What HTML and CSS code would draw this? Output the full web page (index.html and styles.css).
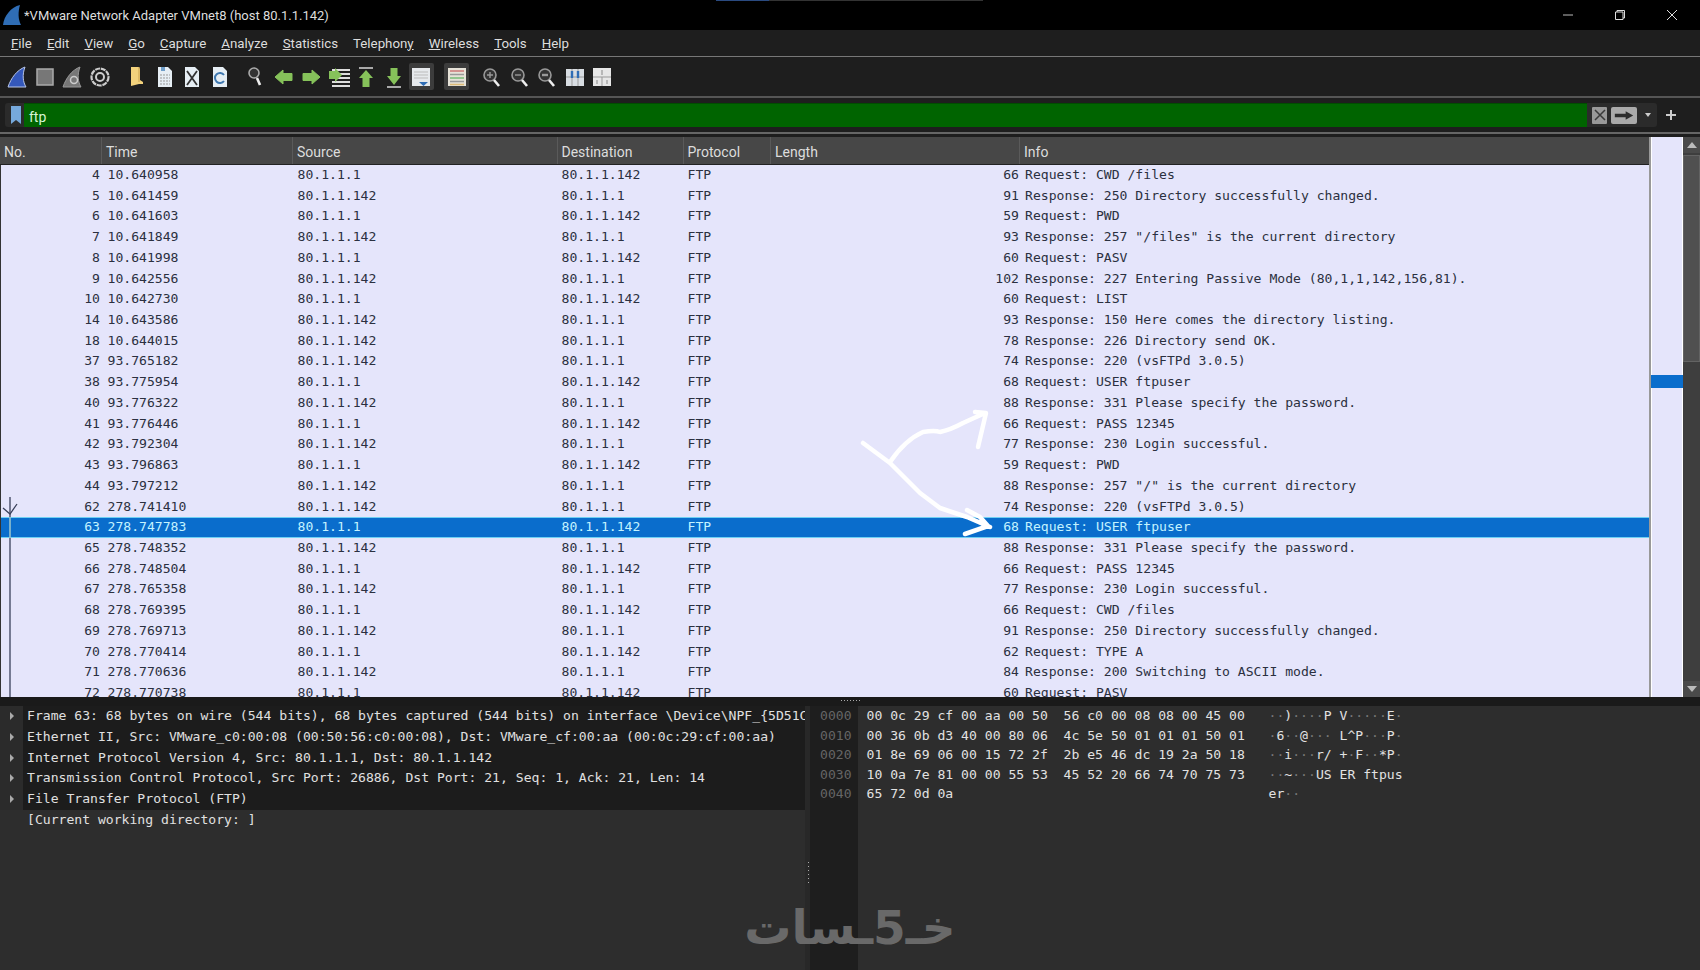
FILE: index.html
```html
<!DOCTYPE html>
<html lang="en">
<head>
    <meta charset="UTF-8">
    <title>*VMware Network Adapter VMnet8 (host 80.1.1.142)</title>
    <link rel="stylesheet" href="styles.css">
</head>
<body>
    <div class="topstrip"></div>
    <div id="titlebar">
        <svg class="appicon" viewBox="0 0 20 22"><path d="M1 21 C2 12 9 3 18 1 C16 8 16 15 19 21 Z" fill="#2f6db5"/></svg>
        <span class="titletext">*VMware Network Adapter VMnet8 (host 80.1.1.142)</span>
        <div class="wincontrols">
            <svg class="wincontrol" viewBox="0 0 12 12"><path d="M1 6H11" stroke="#bbb" fill="none"/></svg>
            <svg class="wincontrol" viewBox="0 0 12 12"><path d="M3 3V1.5H10.5V9H9M1.5 3H9V10.5H1.5Z" stroke="#ddd" fill="none"/></svg>
            <svg class="wincontrol" viewBox="0 0 12 12"><path d="M1 1L11 11M11 1L1 11" stroke="#ddd" fill="none"/></svg>
        </div>
    </div>
    <div id="menubar">
        <span><u>F</u>ile</span>
        <span><u>E</u>dit</span>
        <span><u>V</u>iew</span>
        <span><u>G</u>o</span>
        <span><u>C</u>apture</span>
        <span><u>A</u>nalyze</span>
        <span><u>S</u>tatistics</span>
        <span>Telephon<u>y</u></span>
        <span><u>W</u>ireless</span>
        <span><u>T</u>ools</span>
        <span><u>H</u>elp</span>
    </div>
    <div id="toolbar">
        <div class="toolgroup first">
            <div class="tool"><svg viewBox="0 0 24 24"><path d="M3 22 C6 13 12 5 20 2 C17 10 18 17 21 22 Z" fill="#3458bb" stroke="#b9c6e6"/></svg></div>
            <div class="tool"><svg viewBox="0 0 24 24"><rect x="4" y="4" width="16" height="16" fill="#777" stroke="#aaa" stroke-width="1.5"/></svg></div>
            <div class="tool"><svg viewBox="0 0 24 24"><path d="M3 22 C6 13 12 5 20 2 C17 10 18 17 21 22 Z" fill="#777" stroke="#999"/><circle cx="14" cy="15" r="3.5" fill="none" stroke="#ccc" stroke-width="1.5"/></svg></div>
            <div class="tool"><svg viewBox="0 0 24 24"><circle cx="12" cy="12" r="8.5" fill="none" stroke="#ccc" stroke-width="2.2" stroke-dasharray="5 0.8"/><circle cx="12" cy="12" r="4" fill="none" stroke="#ccc" stroke-width="2"/></svg></div>
        </div>
        <div class="toolgroup second">
            <div class="tool"><svg viewBox="0 0 24 24"><path d="M6 2H14L15 4V15L18 17V19L14 19L6 21Z" fill="#f3d27c"/><path d="M14 2V17" stroke="#c9a24e"/></svg></div>
            <div class="tool"><svg viewBox="0 0 24 24"><path d="M5 2H15L19 6V22H5Z" fill="#e6eef4"/><path d="M7 10H17M7 13H17M7 16H17M7 19H17" stroke="#999" stroke-dasharray="2 1"/><path d="M8 2H12V6H8Z" fill="#6f9ec9"/></svg></div>
            <div class="tool"><svg viewBox="0 0 24 24"><path d="M5 2H15L19 6V22H5Z" fill="#e6eef4"/><path d="M7 6L17 20M17 6L7 20" stroke="#333" stroke-width="1.8"/></svg></div>
            <div class="tool"><svg viewBox="0 0 24 24"><path d="M5 2H15L19 6V22H5Z" fill="#e6eef4"/><path d="M16 10A5 5 0 1 0 16 16" stroke="#3f78b0" stroke-width="2" fill="none"/></svg></div>
        </div>
        <div class="toolgroup">
            <div class="tool"><svg viewBox="0 0 24 24"><circle cx="10" cy="8" r="5" fill="#333" stroke="#aaa" stroke-width="1.6"/><path d="M13 13L16 20" stroke="#eee" stroke-width="2.6"/></svg></div>
            <div class="tool"><svg viewBox="0 0 24 24"><path d="M3 12L11 5V8.500H20V15.500H11V19Z" fill="#86c25a" stroke="#86c25a" stroke-linejoin="round"/></svg></div>
            <div class="tool"><svg viewBox="0 0 24 24"><path d="M21 12L13 5V8.500H4V15.500H13V19Z" fill="#86c25a" stroke="#86c25a" stroke-linejoin="round"/></svg></div>
            <div class="tool"><svg viewBox="0 0 24 24"><path d="M5 5H23M5 9H23M5 13H23M5 17H23M5 21H23" stroke="#ddd" stroke-width="2"/><path d="M15 10L8 3V6H2V14H8V17Z" fill="#86c25a"/></svg></div>
            <div class="tool"><svg viewBox="0 0 24 24"><path d="M5 3H19" stroke="#ccc" stroke-width="1.6"/><path d="M12 5L19 13H15.500V22H8.500V13H5Z" fill="#86c25a"/></svg></div>
            <div class="tool"><svg viewBox="0 0 24 24"><path d="M12 20L19 11H15.500V3H8.500V11H5Z" fill="#86c25a"/><path d="M5 22H19" stroke="#ccc" stroke-width="1.6"/></svg></div>
            <div class="tool boxed"><svg viewBox="0 0 24 24"><path d="M3 3H21V21H3Z" fill="#e6e9ec"/><path d="M5 7H19M5 10H19M5 13H19" stroke="#bbb"/><path d="M10 17H19L14.500 21Z" fill="#2f6db5"/></svg></div>
        </div>
        <div class="toolgroup">
            <div class="tool boxed"><svg viewBox="0 0 24 24"><path d="M3 3H21V21H3Z" fill="#e6e2d8"/><path d="M5 6H19" stroke="#c77" stroke-width="1.5"/><path d="M5 9.500H19" stroke="#999" stroke-width="1.5"/><path d="M5 13H19" stroke="#7b7" stroke-width="1.5"/><path d="M5 16.500H19" stroke="#999" stroke-width="1.5"/><path d="M5 19.500H19" stroke="#db7" stroke-width="1.5"/></svg></div>
        </div>
        <div class="toolgroup">
            <div class="tool"><svg viewBox="0 0 24 24"><circle cx="10" cy="10" r="6" fill="#333" stroke="#999" stroke-width="1.6"/><path d="M7 10H13M10 7V13" stroke="#999" stroke-width="1.4"/><path d="M14 15L19 21" stroke="#eee" stroke-width="2.6"/></svg></div>
            <div class="tool"><svg viewBox="0 0 24 24"><circle cx="10" cy="10" r="6" fill="#333" stroke="#999" stroke-width="1.6"/><path d="M7 10H13" stroke="#999" stroke-width="1.4"/><path d="M14 15L19 21" stroke="#eee" stroke-width="2.6"/></svg></div>
            <div class="tool"><svg viewBox="0 0 24 24"><circle cx="10" cy="10" r="6" fill="#333" stroke="#999" stroke-width="1.6"/><path d="M7 10H13" stroke="#999" stroke-width="2.400"/><path d="M14 15L19 21" stroke="#eee" stroke-width="2.6"/></svg></div>
            <div class="tool"><svg viewBox="0 0 24 24"><path d="M3 4H21V21H3Z" fill="#d8dde2"/><path d="M9 4V21M15 4V21M3 12H21" stroke="#999"/><path d="M9 6V13M15 6V13" stroke="#2f6db5" stroke-width="2.400"/></svg></div>
            <div class="tool"><svg viewBox="0 0 24 24"><path d="M3 3H21V21H3Z" fill="#e6e6e6"/><path d="M3 12H21M12 12V21" stroke="#999"/><path d="M12 5V10M7 15V19M17 15V19" stroke="#888"/></svg></div>
        </div>
    </div>
    <div id="filterbar">
        <div class="filterframe">
            <svg class="bookmark" viewBox="0 0 12 20"><path d="M1 1H11V19L6 15L1 19Z" fill="#76a9dc"/></svg>
            <div class="filterinput">ftp</div>
            <div class="filterbtns">
                <div class="clearbtn"><svg viewBox="0 0 14 14"><path d="M2 2L12 12M12 2L2 12" stroke="#3a3a3a" stroke-width="1.5"/></svg></div>
                <div class="applybtn"><svg viewBox="0 0 24 12"><path d="M1 4H14V1L23 6L14 11V8H1Z" fill="#2c2c2c"/></svg></div>
                <span class="caret"></span>
            </div>
        </div>
        <svg class="plus" viewBox="0 0 10 10"><path d="M5 0V10M0 5H10" stroke="#ccc" stroke-width="2"/></svg>
    </div>
    <div id="packets">
        <div class="listpane">
            <div class="listheader">
                <div class="h-no">No.</div>
                <div class="h-time">Time</div>
                <div class="h-src">Source</div>
                <div class="h-dst">Destination</div>
                <div class="h-proto">Protocol</div>
                <div class="h-len">Length</div>
                <div class="h-info">Info</div>
            </div>
            <div class="listbody">
                <div class="row"><span class="no">4</span><span class="time">10.640958</span><span class="src">80.1.1.1</span><span class="dst">80.1.1.142</span><span class="proto">FTP</span><span class="len">66</span><span class="info">Request: CWD /files</span></div>
                <div class="row"><span class="no">5</span><span class="time">10.641459</span><span class="src">80.1.1.142</span><span class="dst">80.1.1.1</span><span class="proto">FTP</span><span class="len">91</span><span class="info">Response: 250 Directory successfully changed.</span></div>
                <div class="row"><span class="no">6</span><span class="time">10.641603</span><span class="src">80.1.1.1</span><span class="dst">80.1.1.142</span><span class="proto">FTP</span><span class="len">59</span><span class="info">Request: PWD</span></div>
                <div class="row"><span class="no">7</span><span class="time">10.641849</span><span class="src">80.1.1.142</span><span class="dst">80.1.1.1</span><span class="proto">FTP</span><span class="len">93</span><span class="info">Response: 257 "/files" is the current directory</span></div>
                <div class="row"><span class="no">8</span><span class="time">10.641998</span><span class="src">80.1.1.1</span><span class="dst">80.1.1.142</span><span class="proto">FTP</span><span class="len">60</span><span class="info">Request: PASV</span></div>
                <div class="row"><span class="no">9</span><span class="time">10.642556</span><span class="src">80.1.1.142</span><span class="dst">80.1.1.1</span><span class="proto">FTP</span><span class="len">102</span><span class="info">Response: 227 Entering Passive Mode (80,1,1,142,156,81).</span></div>
                <div class="row"><span class="no">10</span><span class="time">10.642730</span><span class="src">80.1.1.1</span><span class="dst">80.1.1.142</span><span class="proto">FTP</span><span class="len">60</span><span class="info">Request: LIST</span></div>
                <div class="row"><span class="no">14</span><span class="time">10.643586</span><span class="src">80.1.1.142</span><span class="dst">80.1.1.1</span><span class="proto">FTP</span><span class="len">93</span><span class="info">Response: 150 Here comes the directory listing.</span></div>
                <div class="row"><span class="no">18</span><span class="time">10.644015</span><span class="src">80.1.1.142</span><span class="dst">80.1.1.1</span><span class="proto">FTP</span><span class="len">78</span><span class="info">Response: 226 Directory send OK.</span></div>
                <div class="row"><span class="no">37</span><span class="time">93.765182</span><span class="src">80.1.1.142</span><span class="dst">80.1.1.1</span><span class="proto">FTP</span><span class="len">74</span><span class="info">Response: 220 (vsFTPd 3.0.5)</span></div>
                <div class="row"><span class="no">38</span><span class="time">93.775954</span><span class="src">80.1.1.1</span><span class="dst">80.1.1.142</span><span class="proto">FTP</span><span class="len">68</span><span class="info">Request: USER ftpuser</span></div>
                <div class="row"><span class="no">40</span><span class="time">93.776322</span><span class="src">80.1.1.142</span><span class="dst">80.1.1.1</span><span class="proto">FTP</span><span class="len">88</span><span class="info">Response: 331 Please specify the password.</span></div>
                <div class="row"><span class="no">41</span><span class="time">93.776446</span><span class="src">80.1.1.1</span><span class="dst">80.1.1.142</span><span class="proto">FTP</span><span class="len">66</span><span class="info">Request: PASS 12345</span></div>
                <div class="row"><span class="no">42</span><span class="time">93.792304</span><span class="src">80.1.1.142</span><span class="dst">80.1.1.1</span><span class="proto">FTP</span><span class="len">77</span><span class="info">Response: 230 Login successful.</span></div>
                <div class="row"><span class="no">43</span><span class="time">93.796863</span><span class="src">80.1.1.1</span><span class="dst">80.1.1.142</span><span class="proto">FTP</span><span class="len">59</span><span class="info">Request: PWD</span></div>
                <div class="row"><span class="no">44</span><span class="time">93.797212</span><span class="src">80.1.1.142</span><span class="dst">80.1.1.1</span><span class="proto">FTP</span><span class="len">88</span><span class="info">Response: 257 "/" is the current directory</span></div>
                <div class="row"><span class="no">62</span><span class="time">278.741410</span><span class="src">80.1.1.142</span><span class="dst">80.1.1.1</span><span class="proto">FTP</span><span class="len">74</span><span class="info">Response: 220 (vsFTPd 3.0.5)</span></div>
                <div class="row selected"><span class="no">63</span><span class="time">278.747783</span><span class="src">80.1.1.1</span><span class="dst">80.1.1.142</span><span class="proto">FTP</span><span class="len">68</span><span class="info">Request: USER ftpuser</span></div>
                <div class="row"><span class="no">65</span><span class="time">278.748352</span><span class="src">80.1.1.142</span><span class="dst">80.1.1.1</span><span class="proto">FTP</span><span class="len">88</span><span class="info">Response: 331 Please specify the password.</span></div>
                <div class="row"><span class="no">66</span><span class="time">278.748504</span><span class="src">80.1.1.1</span><span class="dst">80.1.1.142</span><span class="proto">FTP</span><span class="len">66</span><span class="info">Request: PASS 12345</span></div>
                <div class="row"><span class="no">67</span><span class="time">278.765358</span><span class="src">80.1.1.142</span><span class="dst">80.1.1.1</span><span class="proto">FTP</span><span class="len">77</span><span class="info">Response: 230 Login successful.</span></div>
                <div class="row"><span class="no">68</span><span class="time">278.769395</span><span class="src">80.1.1.1</span><span class="dst">80.1.1.142</span><span class="proto">FTP</span><span class="len">66</span><span class="info">Request: CWD /files</span></div>
                <div class="row"><span class="no">69</span><span class="time">278.769713</span><span class="src">80.1.1.142</span><span class="dst">80.1.1.1</span><span class="proto">FTP</span><span class="len">91</span><span class="info">Response: 250 Directory successfully changed.</span></div>
                <div class="row"><span class="no">70</span><span class="time">278.770414</span><span class="src">80.1.1.1</span><span class="dst">80.1.1.142</span><span class="proto">FTP</span><span class="len">62</span><span class="info">Request: TYPE A</span></div>
                <div class="row"><span class="no">71</span><span class="time">278.770636</span><span class="src">80.1.1.142</span><span class="dst">80.1.1.1</span><span class="proto">FTP</span><span class="len">84</span><span class="info">Response: 200 Switching to ASCII mode.</span></div>
                <div class="row"><span class="no">72</span><span class="time">278.770738</span><span class="src">80.1.1.1</span><span class="dst">80.1.1.142</span><span class="proto">FTP</span><span class="len">60</span><span class="info">Request: PASV</span></div>
            </div>
        </div>
        <div class="overview"><div class="overviewmark"></div></div>
        <div class="scrollbar">
            <div class="scrollbtn"><span class="arrow-up"></span></div>
            <div class="scrollthumb"></div>
            <div class="scrolltrack"></div>
            <div class="scrollbtn"><span class="arrow-down"></span></div>
        </div>
    </div>
    <div id="splitter"><div class="griph"></div></div>
    <div id="bottom">
        <div class="details">
            <div class="treetop">
                <div class="treerow"><span class="expander"></span><span class="treetext">Frame 63: 68 bytes on wire (544 bits), 68 bytes captured (544 bits) on interface \Device\NPF_{5D51C</span></div>
                <div class="treerow"><span class="expander"></span><span class="treetext">Ethernet II, Src: VMware_c0:00:08 (00:50:56:c0:00:08), Dst: VMware_cf:00:aa (00:0c:29:cf:00:aa)</span></div>
                <div class="treerow"><span class="expander"></span><span class="treetext">Internet Protocol Version 4, Src: 80.1.1.1, Dst: 80.1.1.142</span></div>
                <div class="treerow"><span class="expander"></span><span class="treetext">Transmission Control Protocol, Src Port: 26886, Dst Port: 21, Seq: 1, Ack: 21, Len: 14</span></div>
                <div class="treerow"><span class="expander"></span><span class="treetext">File Transfer Protocol (FTP)</span></div>
            </div>
            <div class="treerow plain"><span class="treetext">[Current working directory: ]</span></div>
        </div>
        <div class="gripv"><div class="gripdots"></div></div>
        <div class="offsets">
            <div>0000</div>
            <div>0010</div>
            <div>0020</div>
            <div>0030</div>
            <div>0040</div>
        </div>
        <div class="hexdump">
            <div>00 0c 29 cf 00 aa 00 50  56 c0 00 08 08 00 45 00   <i>··</i>)<i>····</i>P V<i>·····</i>E<i>·</i></div>
            <div>00 36 0b d3 40 00 80 06  4c 5e 50 01 01 01 50 01   <i>·</i>6<i>··</i>@<i>···</i> L^P<i>···</i>P<i>·</i></div>
            <div>01 8e 69 06 00 15 72 2f  2b e5 46 dc 19 2a 50 18   <i>··</i>i<i>···</i>r/ +<i>·</i>F<i>··</i>*P<i>·</i></div>
            <div>10 0a 7e 81 00 00 55 53  45 52 20 66 74 70 75 73   <i>··</i>~<i>···</i>US ER ftpus</div>
            <div>65 72 0d 0a                                        er<i>··</i></div>
        </div>
    </div>
    <div class="watermark" dir="rtl" lang="ar">خـ5ـسات</div>
    <svg class="scribble" viewBox="0 0 1700 970">
        <path d="M863 443L890 463L920 493L940 508L967 517L990 527M967 510L980 517L988 526L965 534" />
        <path d="M890 462Q905 440 923 432Q935 430 940 432Q950 430 963 423L985 413M975 412L986 413L982 430L978 447" />
    </svg>
    <svg class="relation" viewBox="0 0 24 210">
        <path d="M10 0V200" stroke="#39405a" stroke-width="1.3" fill="none"/>
        <path d="M3 11L10 17L17 7" stroke="#39405a" stroke-width="1.3" fill="none"/>
        <path d="M10 20V41" stroke="#a8e6f5" stroke-width="1.3" fill="none"/>
    </svg>
</body>
</html>
```

FILE: styles.css
```css
html, body {
    margin: 0;
    height: 100%;
}
body {
    width: 1700px;
    height: 970px;
    overflow: hidden;
    position: relative;
    display: flex;
    flex-direction: column;
    background-color: #1e1e1e;
    font-family: 'Roboto', sans-serif;
    color: #ddd;
}
.topstrip {
    position: absolute;
    top: 0;
    left: 716px;
    width: 267px;
    height: 1px;
    background: linear-gradient(to right, #2a4a80 0, #2a4a80 20%, #333 20%, #333 100%);
}
#titlebar {
    height: 30px;
    flex: none;
    background-color: #000;
    display: flex;
    align-items: center;
    font-size: 13px;
    padding-left: 2px;
}
.appicon {
    width: 20px;
    height: 22px;
    margin-right: 2px;
}
.titletext {
    color: #ddd;
    flex: 1;
}
.wincontrols {
    display: flex;
    gap: 40px;
    padding-right: 22px;
}
.wincontrol {
    width: 12px;
    height: 12px;
}
#menubar {
    height: 27px;
    flex: none;
    box-sizing: border-box;
    border-bottom: 1px solid #777;
    display: flex;
    align-items: center;
    gap: 15px;
    padding-left: 11px;
    font-size: 13.3px;
}
#toolbar {
    height: 41px;
    flex: none;
    display: flex;
    align-items: center;
    gap: 8px;
    padding-left: 3.5px;
    box-sizing: border-box;
    border-bottom: 2px solid #555;
}
.toolgroup {
    display: flex;
}
.toolgroup.first {
    margin-right: 2px;
}
.toolgroup.second {
    margin-right: 1px;
}
.tool {
    width: 27.5px;
    height: 27px;
    display: flex;
    align-items: center;
    justify-content: center;
}
.tool svg {
    width: 24px;
    height: 24px;
}
.tool.boxed {
    width: 25px;
    margin: 0 1.25px;
    background-color: #3c3c3c;
    border-radius: 2px;
}
#filterbar {
    height: 36px;
    flex: none;
    box-sizing: border-box;
    border-bottom: 2px solid #666;
    display: flex;
    align-items: center;
    padding: 0 0 0 5px;
}
.filterframe {
    flex: 1;
    height: 24px;
    display: flex;
    align-items: center;
    background-color: #2b2b2b;
    border-radius: 3px;
}
.bookmark {
    width: 12px;
    height: 20px;
    margin: 0 2px 0 5px;
    flex: none;
}
.filterinput {
    flex: 1;
    height: 24px;
    line-height: 26px;
    background-color: #006400;
    border-top: 1px solid #004d00;
    box-sizing: border-box;
    padding-left: 5px;
    font-size: 14px;
    color: #d5f5d5;
}
.filterbtns {
    display: flex;
    align-items: center;
    width: 70px;
    padding-left: 5px;
    box-sizing: border-box;
}
.clearbtn {
    width: 15px;
    height: 17px;
    background-color: #999;
    display: flex;
    align-items: center;
    justify-content: center;
    border-radius: 1px;
}
.clearbtn svg {
    width: 14px;
    height: 14px;
}
.applybtn {
    width: 26px;
    height: 17px;
    margin-left: 4px;
    background-color: #aaa;
    border-radius: 2px;
    display: flex;
    align-items: center;
    justify-content: center;
}
.applybtn svg {
    width: 20px;
    height: 11px;
}
.caret {
    margin-left: 8px;
    border-left: 3.5px solid transparent;
    border-right: 3.5px solid transparent;
    border-top: 4px solid #ccc;
}
.plus {
    width: 10px;
    height: 10px;
    margin: 0 24px 0 9px;
}
#packets {
    height: 560px;
    margin-top: 3px;
    flex: none;
    display: flex;
}
.listpane {
    width: 1649px;
    flex: none;
    display: flex;
    flex-direction: column;
    border-right: 2px solid #999;
    box-sizing: content-box;
    background-color: #e5e5fb;
}
.listheader {
    height: 28px;
    flex: none;
    display: flex;
    box-sizing: border-box;
    border-bottom: 1px solid #222;
    background-color: #474747;
    font-size: 14px;
    color: #ddd;
    line-height: 31px;
}
.listheader div {
    box-sizing: border-box;
    padding-left: 4px;
    border-right: 1px solid #5a5a5a;
}
.h-no { width: 102px; }
.h-time { width: 191px; }
.h-src { width: 264.5px; }
.h-dst { width: 126px; }
.h-proto { width: 87.5px; }
.h-len { width: 249px; }
.h-info { flex: 1; border-right: none !important; }
.listbody {
    flex: 1;
    overflow: hidden;
    border-left: 1px solid #333;
    font-family: 'DejaVu Sans Mono', monospace;
    font-size: 13.1px;
    color: #2b3040;
}
.row {
    height: 20.72px;
    line-height: 20.72px;
    display: flex;
    white-space: pre;
}
.row.selected {
    background-color: #0a6dcc;
    color: #c4f3ff;
    box-shadow: inset 0 1px 0 #6fd0f2, inset 0 -1px 0 #6fd0f2;
}
.no {
    width: 99px;
    text-align: right;
}
.time {
    width: 197.500px;
    box-sizing: border-box;
    padding-left: 7.5px;
}
.src { width: 264px; }
.dst { width: 126px; }
.proto { width: 126px; }
.len {
    width: 205.500px;
    text-align: right;
}
.info { padding-left: 6px; }
.overview {
    width: 32px;
    flex: none;
    background-color: #e5e5fb;
    border-left: 1px solid #fff;
    border-right: 1px solid #fff;
    padding-top: 238px;
    box-sizing: border-box;
}
.overviewmark {
    height: 13px;
    margin: 0 -1px;
    background-color: #0a6dcc;
}
.scrollbar {
    flex: 1;
    display: flex;
    flex-direction: column;
    background-color: #3e3e3e;
}
.scrollbtn {
    height: 16px;
    flex: none;
    background-color: #4a4a4a;
    display: flex;
    align-items: center;
    justify-content: center;
}
.arrow-up {
    border-left: 5px solid transparent;
    border-right: 5px solid transparent;
    border-bottom: 6px solid #bbb;
}
.arrow-down {
    border-left: 5px solid transparent;
    border-right: 5px solid transparent;
    border-top: 6px solid #bbb;
}
.scrollthumb {
    height: 207px;
    margin-top: 2px;
    box-sizing: border-box;
    border: 1px solid #636363;
    background-color: #505050;
}
.scrolltrack {
    flex: 1;
}
#splitter {
    height: 9px;
    flex: none;
    background-color: #1a1a1a;
    position: relative;
}
.griph {
    position: absolute;
    left: 841px;
    top: 3px;
    width: 21px;
    height: 1px;
    background: repeating-linear-gradient(to right, #aaa 0, #aaa 1px, transparent 1px, transparent 3px);
}
#bottom {
    flex: 1;
    min-height: 0;
    display: flex;
    font-family: 'DejaVu Sans Mono', monospace;
    font-size: 13.1px;
    background-color: #2d2d2d;
}
.details {
    width: 805px;
    flex: none;
    overflow: hidden;
}
.treetop {
    background-color: #1c1c1c;
    height: 104px;
}
.treerow {
    height: 20.8px;
    line-height: 20.8px;
    display: flex;
    white-space: pre;
    color: #e0e0e0;
}
.treerow .treetext {
    flex: 1;
    padding-left: 4px;
    overflow: hidden;
}
.treerow.plain {
    padding-left: 23px;
}
.expander {
    width: 23px;
    flex: none;
    background-color: #2b2b2b;
    position: relative;
}
.expander::after {
    content: "";
    position: absolute;
    left: 10px;
    top: 6px;
    border-top: 4px solid transparent;
    border-bottom: 4px solid transparent;
    border-left: 4px solid #aaa;
}
.gripv {
    width: 5px;
    flex: none;
    background-color: #282828;
    position: relative;
}
.gripdots {
    position: absolute;
    left: 3px;
    top: 156px;
    width: 1px;
    height: 24px;
    background: repeating-linear-gradient(to bottom, #aaa 0, #aaa 1px, transparent 1px, transparent 4px);
}
.offsets {
    width: 48px;
    flex: none;
    box-sizing: border-box;
    padding-left: 10px;
    background-color: #1e1e1e;
    color: #666;
    line-height: 19.6px;
}
.hexdump {
    flex: 1;
    padding-left: 8.5px;
    line-height: 19.6px;
    color: #e2e2e2;
}
.hexdump div {
    white-space: pre;
}
.hexdump i {
    font-style: normal;
    color: #777;
}
.watermark {
    position: absolute;
    left: 700px;
    top: 893px;
    width: 300px;
    text-align: center;
    font-family: 'DejaVu Sans', sans-serif;
    font-weight: bold;
    font-size: 47px;
    line-height: 70px;
    color: #696969;
    white-space: nowrap;
}
.scribble {
    position: absolute;
    left: 0;
    top: 0;
    width: 1700px;
    height: 970px;
    pointer-events: none;
}
.scribble path {
    fill: none;
    stroke: #fff;
    stroke-width: 4.5;
    stroke-linecap: round;
    stroke-linejoin: round;
}
.relation {
    position: absolute;
    left: 0;
    top: 497px;
    width: 24px;
    height: 210px;
    clip-path: inset(0 0 10px 0);
}
```
